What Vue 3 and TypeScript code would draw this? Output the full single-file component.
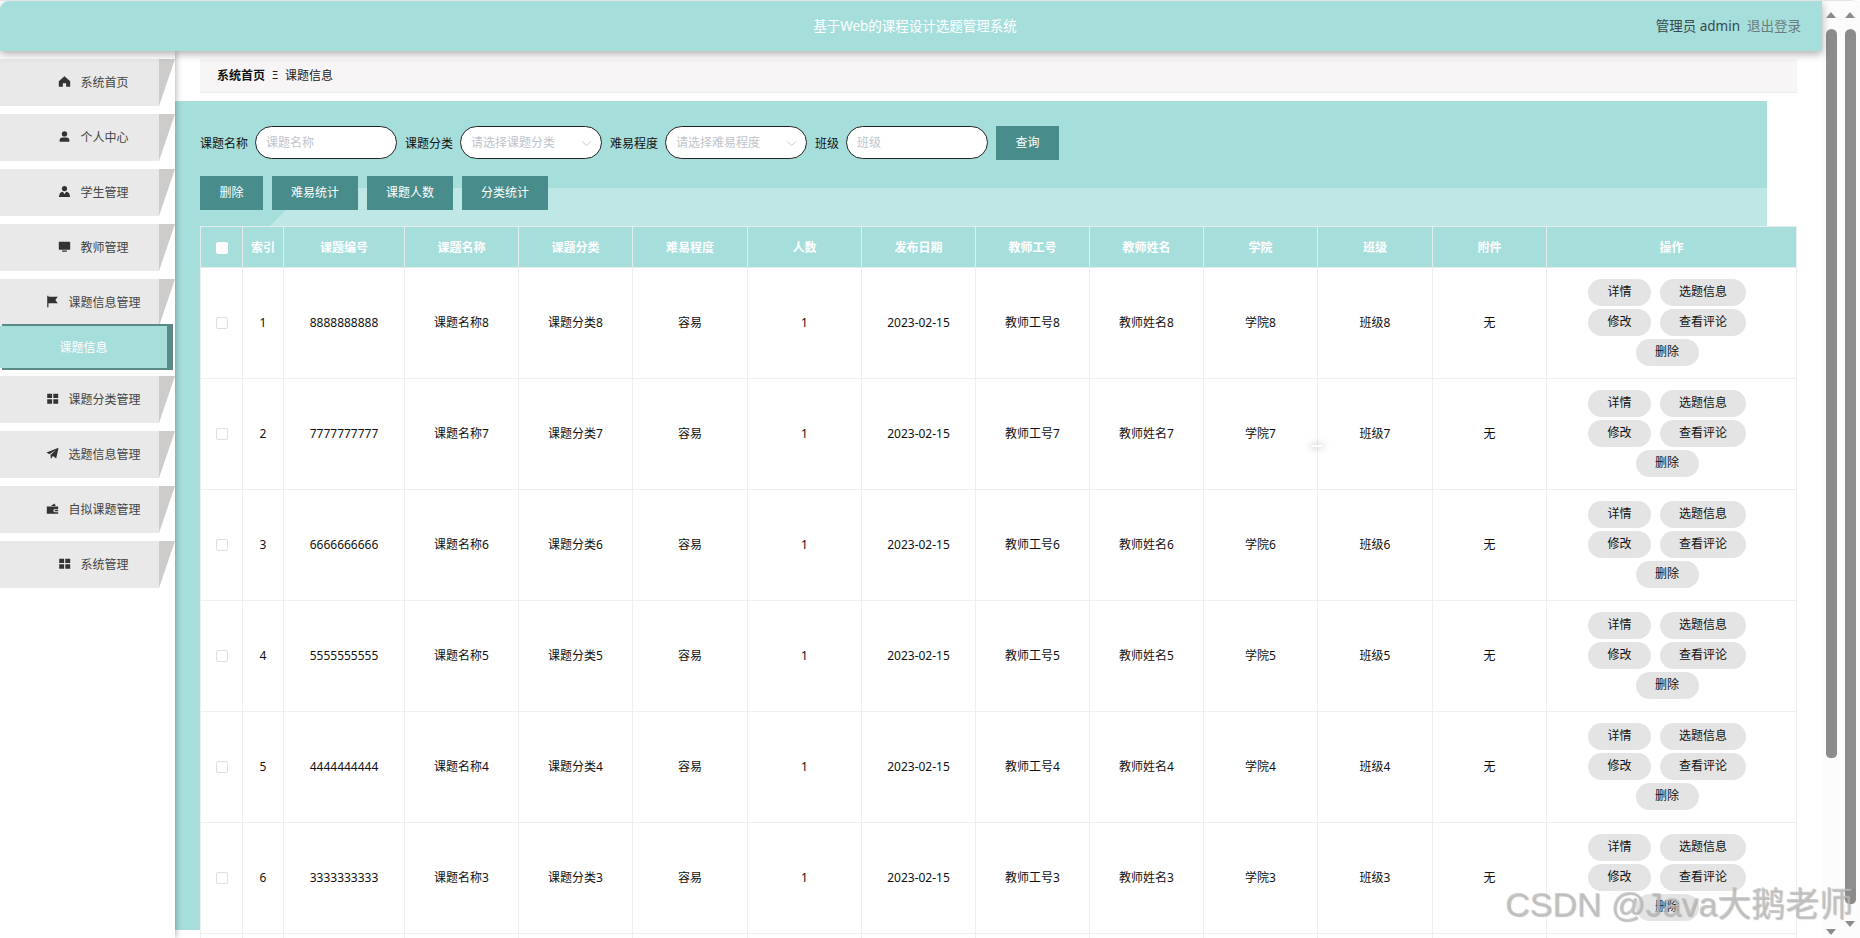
<script setup lang="ts">
interface MenuItem {
  label: string
  icon: string
  active?: boolean
}

const icons: Record<string, string> = {
  home: 'M8 1.5 15 7.6V14.5H10V10H6V14.5H1V7.6Z',
  user: 'M8 1.5a3.2 3.2 0 1 1 0 6.6 3.2 3.2 0 0 1 0-6.6ZM2 14.5v-2.2c0-2 1.6-3.2 3.4-3.2h5.2c1.8 0 3.4 1.200 3.4 3.200v2.200Z',
  student: 'M8 1.200a3.200 3.200 0 1 1 0 6.400 3.200 3.200 0 0 1 0-6.400ZM1 14.800l1.200-4.400c.4-1.200 1.800-1.800 3.800-2.200l2 3.200 2-3.200c2 .4 3.400 1 3.800 2.200l1.200 4.400Z',
  monitor: 'M1.500 2h13a.5.5 0 0 1 .5.5v9a.5.5 0 0 1-.5.5h-13a.5.5 0 0 1-.5-.5v-9a.5.5 0 0 1 .5-.5ZM5 13h6v1.500H5Z',
  flag: 'M1.500 1h1.500v14H1.500ZM3 2h11.500l-3 4 3 4H3Z',
  grid: 'M1.500 2h6v5.500h-6ZM9 2h6v5.500H9ZM1.500 9h6v5.500h-6ZM9 9h6v5.500H9Z',
  plane: 'M15.500 1 12.500 14 8.500 11.200 6 14.800 5.500 9.800 12.500 3.500 4.200 8.800 .5 6.800Z',
  wallet: 'M1 5.500h14v3H11a2 2 0 0 0 0 4h4v2H1ZM6 5l4.500-3.200 1.500 3.200ZM11.500 9.500H15v2h-3.500a1 1 0 0 1 0-2Z'
}

const menu: MenuItem[] = [
  { label: '系统首页', icon: 'home' },
  { label: '个人中心', icon: 'user' },
  { label: '学生管理', icon: 'student' },
  { label: '教师管理', icon: 'monitor' },
  { label: '课题信息管理', icon: 'flag', active: true },
  { label: '课题分类管理', icon: 'grid' },
  { label: '选题信息管理', icon: 'plane' },
  { label: '自拟课题管理', icon: 'wallet' },
  { label: '系统管理', icon: 'grid' }
]

const headers: string[] = [
  '索引', '课题编号', '课题名称', '课题分类', '难易程度', '人数', '发布日期',
  '教师工号', '教师姓名', '学院', '班级', '附件', '操作'
]

const widths: number[] = [42, 41, 121, 114, 114, 115, 114, 114, 114, 114, 114, 115, 114, 251]

const rows = [8, 7, 6, 5, 4, 3].map((n, i) => ({
  index: i + 1,
  cells: [
    String(n).repeat(10),
    `课题名称${n}`,
    `课题分类${n}`,
    '容易',
    '1',
    '2023-02-15',
    `教师工号${n}`,
    `教师姓名${n}`,
    `学院${n}`,
    `班级${n}`,
    '无'
  ]
}))

const actions: string[] = ['详情', '选题信息', '修改', '查看评论', '删除']
const tools: string[] = ['删除', '难易统计', '课题人数', '分类统计']
</script>

<template>
  <div class="window">
    <div class="main">
      <header class="topbar">
        <span></span>
        <div class="title">基于Web的课程设计选题管理系统</div>
        <div class="account">
          <span class="who">管理员 admin</span>
          <span class="logout">退出登录</span>
        </div>
      </header>

      <div class="body">
        <aside class="sidebar">
          <template v-for="item in menu" :key="item.label">
            <div class="menu-item">
              <svg class="menu-icon" viewBox="0 0 16 16"><path :d="icons[item.icon]" /></svg>
              <span>{{ item.label }}</span>
            </div>
            <div v-if="item.active" class="sub-item">课题信息</div>
          </template>
        </aside>

        <main class="content">
          <nav class="crumbs">
            <b>系统首页</b>
            <i>Ξ</i>
            <span>课题信息</span>
          </nav>

          <section class="panel">
            <div class="panel-light"></div>

            <div class="filters">
              <label>课题名称</label>
              <div class="field"><span>课题名称</span></div>
              <label>课题分类</label>
              <div class="field">
                <span>请选择课题分类</span>
                <svg class="chevron" viewBox="0 0 12 8"><path d="M1 1.500 6 6.500 11 1.500" /></svg>
              </div>
              <label>难易程度</label>
              <div class="field">
                <span>请选择难易程度</span>
                <svg class="chevron" viewBox="0 0 12 8"><path d="M1 1.500 6 6.500 11 1.500" /></svg>
              </div>
              <label>班级</label>
              <div class="field"><span>班级</span></div>
              <button class="teal-btn query" type="button">查询</button>
            </div>

            <div class="tools">
              <button v-for="t in tools" :key="t" class="teal-btn" type="button">{{ t }}</button>
            </div>

            <table class="grid">
              <colgroup>
                <col v-for="(w, i) in widths" :key="i" :style="{ width: w + 'px' }" />
              </colgroup>
              <thead>
                <tr>
                  <th><span class="check head"></span></th>
                  <th v-for="h in headers" :key="h">{{ h }}</th>
                </tr>
              </thead>
              <tbody>
                <tr v-for="row in rows" :key="row.index">
                  <td><span class="check"></span></td>
                  <td>{{ row.index }}</td>
                  <td v-for="(c, i) in row.cells" :key="i">{{ c }}</td>
                  <td class="ops">
                    <div class="ops-wrap">
                      <button v-for="a in actions" :key="a" class="pill" type="button">{{ a }}</button>
                    </div>
                  </td>
                </tr>
                <tr class="rest">
                  <td v-for="(w, i) in widths" :key="i"></td>
                </tr>
              </tbody>
            </table>
          </section>
        </main>
      </div>
    </div>

    <div class="scroll-strip">
      <div class="track">
        <span class="arrow up"></span>
        <span class="thumb short"></span>
        <span class="arrow down low"></span>
      </div>
      <div class="track">
        <span class="arrow up"></span>
        <span class="thumb long"></span>
        <span class="arrow down"></span>
      </div>
    </div>

    <div class="cursor-mark"></div>
    <div class="watermark">CSDN @Java大鹅老师</div>
  </div>
</template>

<style scoped>
.window {
  position: relative;
  display: flex;
  width: 1860px;
  height: 938px;
  box-sizing: border-box;
  overflow: hidden;
  background: #fff;
  border-top: 1px solid #e4e4e4;
  border-top-right-radius: 9px;
  font-family: "Noto Sans", "Noto Sans CJK SC", sans-serif;
  font-size: 12px;
  color: #111;
}
.main {
  width: 1822px;
  flex: none;
  display: flex;
  flex-direction: column;
}
.topbar {
  position: relative;
  z-index: 3;
  height: 50px;
  flex: none;
  box-sizing: border-box;
  display: grid;
  grid-template-columns: 1fr auto 1fr;
  align-items: center;
  padding: 0 21px 2px 29px;
  background: #a6dedc;
  border-top-left-radius: 9px;
  box-shadow: 0 3px 8px rgba(0, 0, 0, 0.32);
  font-size: 13.5px;
}
.title {
  color: #fff;
}
.account {
  display: flex;
  justify-content: flex-end;
  gap: 7px;
}
.who {
  color: #39484a;
}
.logout {
  color: #6d7d7e;
}
.body {
  display: flex;
  flex: 1;
  min-height: 0;
}
.sidebar {
  position: relative;
  z-index: 2;
  width: 175px;
  flex: none;
  box-sizing: border-box;
  padding-top: 8px;
  background: #fff;
  box-shadow: 1px 0 6px rgba(0, 0, 0, 0.3);
}
.menu-item {
  position: relative;
  width: 159px;
  height: 47px;
  margin-bottom: 8px;
  box-sizing: border-box;
  padding: 0 0 2px 28px;
  display: flex;
  align-items: center;
  justify-content: center;
  gap: 9px;
  background: #e9e9e9;
  color: #444;
}
.menu-item::after {
  content: "";
  position: absolute;
  left: 100%;
  top: 0;
  width: 16px;
  height: 47px;
  background: #cdcccb;
  clip-path: polygon(0 0, 100% 0, 0 100%);
}
.menu-icon {
  width: 13px;
  height: 13px;
  flex: none;
  fill: #333;
}
.sub-item {
  position: relative;
  z-index: 1;
  width: 167px;
  height: 42px;
  margin: -8px 0 8px;
  display: flex;
  align-items: center;
  justify-content: center;
  background: #a6dedc;
  color: #fff;
  box-shadow: 4px 0 0 2px #5a8a88;
}
.content {
  flex: 1;
  min-width: 0;
  padding-top: 8px;
}
.crumbs {
  width: 1597px;
  height: 34px;
  margin: 0 0 8px 25px;
  box-sizing: border-box;
  padding: 0 0 2px 17px;
  display: flex;
  align-items: center;
  background: #f7f5f6;
  border-bottom: 1px solid #ececec;
  color: #222;
}
.crumbs b {
  font-weight: 600;
  color: #111;
}
.crumbs i {
  font-style: normal;
  width: 20px;
  text-align: center;
  font-size: 10px;
}
.panel {
  position: relative;
  width: 1592px;
  height: 829px;
  box-sizing: border-box;
  padding: 25px 0 0 25px;
  background: #a6dedc;
}
.panel-light {
  position: absolute;
  inset: 87px 0 auto 0;
  height: 38px;
  background: #bfe7e6;
  clip-path: polygon(95px 100%, 113px 20px, 135px 10px, 175px 0, 100% 0, 100% 100%);
}
.filters {
  position: relative;
  display: flex;
  align-items: center;
  height: 34px;
}
.filters label {
  margin-right: 7px;
  padding-bottom: 1px;
  color: #111;
}
.field {
  position: relative;
  align-self: flex-start;
  width: 142px;
  height: 33px;
  margin-right: 8px;
  box-sizing: border-box;
  padding: 0 0 1px 10px;
  display: flex;
  align-items: center;
  background: #fff;
  border: 1px solid #222;
  border-radius: 17px;
  color: #c0c4cc;
}
.chevron {
  position: absolute;
  right: 9px;
  top: 13px;
  width: 11px;
  height: 7px;
  fill: none;
  stroke: #c0c4cc;
  stroke-width: 1;
}
.teal-btn {
  height: 34px;
  min-width: 63px;
  padding: 0 19px 2px;
  border: 0;
  background: #488c8b;
  color: #fff;
  font: inherit;
}
.tools {
  position: relative;
  display: flex;
  gap: 9px;
  margin-top: 16px;
}
.grid {
  position: relative;
  width: 1597px;
  margin-top: 16px;
  table-layout: fixed;
  border-collapse: separate;
  border-spacing: 0;
  background: #fff;
}
.grid th,
.grid td {
  box-sizing: border-box;
  padding: 0;
  text-align: center;
  vertical-align: middle;
  border-left: 1px solid #edeef2;
  border-bottom: 1px solid #edeef2;
}
.grid th {
  height: 42px;
  background: #a6dedc;
  color: #fff;
  font-weight: 700;
  border-top: 1px solid #e6ecec;
  border-left-color: #e6ecec;
  border-bottom-color: #e6ecec;
}
.grid td {
  height: 111px;
  padding-bottom: 2px;
  color: #111;
}
.grid tr.rest td {
  height: 20px;
  padding: 0;
}
.grid th:last-child,
.grid td:last-child {
  border-right: 1px solid #edeef2;
}
.check {
  display: inline-block;
  width: 12px;
  height: 12px;
  box-sizing: border-box;
  vertical-align: middle;
  background: #fff;
  border: 1px solid #dcdfe6;
  border-radius: 2px;
}
.check.head {
  border-color: #fff;
}
.grid td.ops {
  padding: 0 9px 2px 0;
}
.ops-wrap {
  display: flex;
  flex-wrap: wrap;
  justify-content: center;
  gap: 3px 9px;
  width: 170px;
  margin: 0 auto;
}
.pill {
  height: 27px;
  min-width: 63px;
  padding: 0 19px 2px;
  border: 0;
  border-radius: 14px;
  background: #e4e4e4;
  color: #111;
  font: inherit;
}
.scroll-strip {
  flex: 1;
  display: flex;
  gap: 8px;
  padding: 0 4px;
  background: #fcfcfc;
}
.track {
  position: relative;
  width: 11px;
  height: 100%;
}
.arrow {
  position: absolute;
  left: 0;
  width: 0;
  height: 0;
  border-left: 5.5px solid transparent;
  border-right: 5.5px solid transparent;
}
.arrow.up {
  top: 11px;
  border-bottom: 6px solid #8c8c8c;
}
.arrow.down {
  top: 920px;
  border-top: 6px solid #8c8c8c;
}
.arrow.down.low {
  top: 928px;
}
.thumb {
  position: absolute;
  left: 0;
  top: 28px;
  width: 11px;
  background: #8c8c8c;
  border-radius: 6px 6px 5px 5px;
}
.thumb.short {
  height: 729px;
}
.thumb.long {
  height: 875px;
}
.cursor-mark {
  position: absolute;
  left: 1312px;
  top: 444px;
  width: 10px;
  height: 2px;
  background: #fff;
  box-shadow: 0 0 7px 2px rgba(0, 0, 0, 0.14);
}
.watermark {
  position: absolute;
  left: 1505px;
  top: 881px;
  white-space: nowrap;
  font-family: "Liberation Sans", "Noto Sans CJK SC", sans-serif;
  font-size: 34px;
  line-height: 44px;
  color: rgba(190, 190, 190, 0.72);
  text-shadow: 1px 1px 1px rgba(130, 130, 130, 0.5);
  pointer-events: none;
}
</style>

<style>
html,
body {
  margin: 0;
  overflow: hidden;
  background: #fff;
}
</style>
